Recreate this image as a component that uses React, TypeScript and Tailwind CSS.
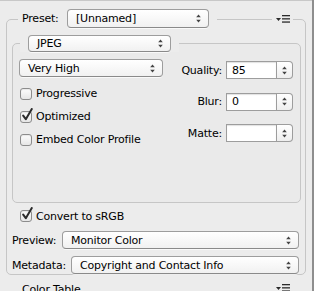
import React from "react";

const FONT = { fontFamily: '"DejaVu Sans", "Liberation Sans", sans-serif' };

function UpDown() {
  return (
    <svg width="5" height="9" viewBox="0 0 5 9" className="shrink-0">
      <path d="M2.5 0.5 L4.8 3.3 L0.2 3.3 Z" fill="#444" />
      <path d="M2.5 8.5 L4.8 5.7 L0.2 5.7 Z" fill="#444" />
    </svg>
  );
}

function Select({ label, className = "" }: { label: string; className?: string }) {
  return (
    <div
      className={
        "flex items-center justify-between rounded-[4px] border border-[#9d9d9d] border-b-[#8a8a8a] bg-gradient-to-b from-white to-[#f1f1f1] pl-[8px] pr-[7px] shadow-[0_1px_0_rgba(255,255,255,0.7)] " +
        className
      }
    >
      <span className="text-[11px] leading-none text-black">{label}</span>
      <UpDown />
    </div>
  );
}

function Checkbox({ checked, label }: { checked?: boolean; label: string }) {
  return (
    <div className="flex items-center">
      <div className="relative w-[12px] h-[12px] rounded-[3px] border border-[#8c8c8c] bg-gradient-to-b from-[#fdfdfd] to-[#e6e6e6] shadow-[inset_0_1px_1px_rgba(0,0,0,0.08)]">
        {checked && (
          <svg
            width="13"
            height="14"
            viewBox="0 0 13 14"
            className="absolute left-[0px] top-[-4px]"
          >
            <path
              d="M2.2 7.6 L4.8 11.2 L10.8 1"
              stroke="#2b2b2b"
              strokeWidth="2"
              fill="none"
              strokeLinecap="round"
              strokeLinejoin="round"
            />
          </svg>
        )}
      </div>
      <span className="ml-[4px] text-[11px] leading-none text-black">{label}</span>
    </div>
  );
}

function SpinField({ value }: { value: string }) {
  return (
    <div className="flex h-[18px] w-[67px]">
      <div className="flex h-full w-[51px] items-center border border-[#9d9d9d] bg-white pl-[5px] shadow-[inset_0_1px_1px_rgba(0,0,0,0.12)]">
        <span className="text-[11px] leading-none text-black">{value}</span>
      </div>
      <div className="flex h-full w-[16px] items-center justify-center rounded-r-[4px] border border-l-0 border-[#9d9d9d] bg-gradient-to-b from-white to-[#eeeeee]">
        <UpDown />
      </div>
    </div>
  );
}

function MenuIcon() {
  return (
    <svg width="14" height="8" viewBox="0 0 14 8" className="shrink-0">
      <path d="M0 3 L5 3 L2.5 6 Z" fill="#2a2a2a" />
      <rect x="6" y="0" width="8" height="1.3" fill="#2a2a2a" />
      <rect x="6" y="3.2" width="8" height="1.3" fill="#2a2a2a" />
      <rect x="6" y="6.4" width="8" height="1.3" fill="#2a2a2a" />
    </svg>
  );
}

export default function App() {
  return (
    <div
      className="flex h-[291px] w-[314px] overflow-hidden bg-[#ececec] text-black tracking-[-0.2px]"
      style={FONT}
    >
      <div className="flex w-[312px] flex-col border-t border-[#c8c8c8]">
        {/* Outer group box */}
        <div className="ml-[6px] mt-[18px] flex h-[260px] w-[300px] flex-col rounded-[5px] border border-[#c6c6c6]">
          {/* Header overlapping top border */}
          <div className="-mt-[11px] flex h-[19px] items-center">
            <div className="ml-[11px] flex h-full w-[49px] items-center bg-[#ececec] pl-[4px]">
              <span className="text-[11px] leading-none">Preset:</span>
            </div>
            <Select label="[Unnamed]" className="h-[19px] w-[142px]" />
            <div className="h-full w-[8px] bg-[#ececec]" />
            <div className="flex-1" />
            <div className="flex h-full w-[21px] items-center bg-[#ececec] pl-[4px]">
              <MenuIcon />
            </div>
            <div className="w-[12px]" />
          </div>

          {/* Inner group box */}
          <div className="ml-[5px] mt-[15px] flex h-[160px] w-[289px] flex-col rounded-[5px] border border-[#c6c6c6] bg-[#eaeaea]">
            <div className="-mt-[9px] flex h-[17px] items-center">
              <div className="ml-[7px] h-full w-[8px] bg-[#ececec]" />
              <Select label="JPEG" className="h-[17px] w-[143px]" />
              <div className="h-full w-[8px] bg-[#ececec]" />
              <div className="flex-1" />
            </div>

            <div className="flex">
              {/* left column */}
              <div className="ml-[6px] flex w-[144px] flex-col">
                <Select label="Very High" className="mt-[7px] h-[18px] w-[144px]" />
                <div className="mt-[5px] flex flex-col pl-[1px]">
                  <div className="flex h-[23px] items-center">
                    <Checkbox label="Progressive" />
                  </div>
                  <div className="flex h-[23px] items-center">
                    <Checkbox checked label="Optimized" />
                  </div>
                  <div className="flex h-[23px] items-center">
                    <Checkbox label="Embed Color Profile" />
                  </div>
                </div>
              </div>
              {/* right column */}
              <div className="mt-[9px] grid grid-cols-[59px_67px] gap-x-[4px] gap-y-[5px]">
                <div className="flex h-[18px] items-center justify-end text-[11px] leading-none">
                  Quality:
                </div>
                <SpinField value="85" />
                <div className="flex h-[18px] items-center justify-end text-[11px] leading-none">
                  Blur:
                </div>
                <SpinField value="0" />
                <div className="flex h-[18px] items-center justify-end text-[11px] leading-none">
                  Matte:
                </div>
                <SpinField value="" />
              </div>
            </div>
          </div>

          {/* Convert */}
          <div className="ml-[13px] mt-[4px] flex h-[18px] items-center">
            <Checkbox checked label="Convert to sRGB" />
          </div>
          <div className="mt-[6px] flex h-[18px] items-center">
            <div className="ml-[5px] w-[50px] text-[11px] leading-none">Preview:</div>
            <Select label="Monitor Color" className="mr-[6px] h-[18px] flex-1" />
          </div>
          <div className="mt-[7px] flex h-[18px] items-center">
            <div className="ml-[5px] w-[59px] text-[11px] leading-none">Metadata:</div>
            <Select label="Copyright and Contact Info" className="mr-[6px] h-[18px] flex-1" />
          </div>
        </div>

        {/* Color Table */}
        <div className="mt-[8px] flex h-[13px] items-start">
          <div className="ml-[22px] text-[11px] leading-[13px]">Color Table</div>
          <div className="flex-1" />
          <div className="mr-[22px] mt-[1px]">
            <MenuIcon />
          </div>
        </div>
      </div>
      <div className="h-full w-[2px] bg-[#8e8e8e]" />
    </div>
  );
}
